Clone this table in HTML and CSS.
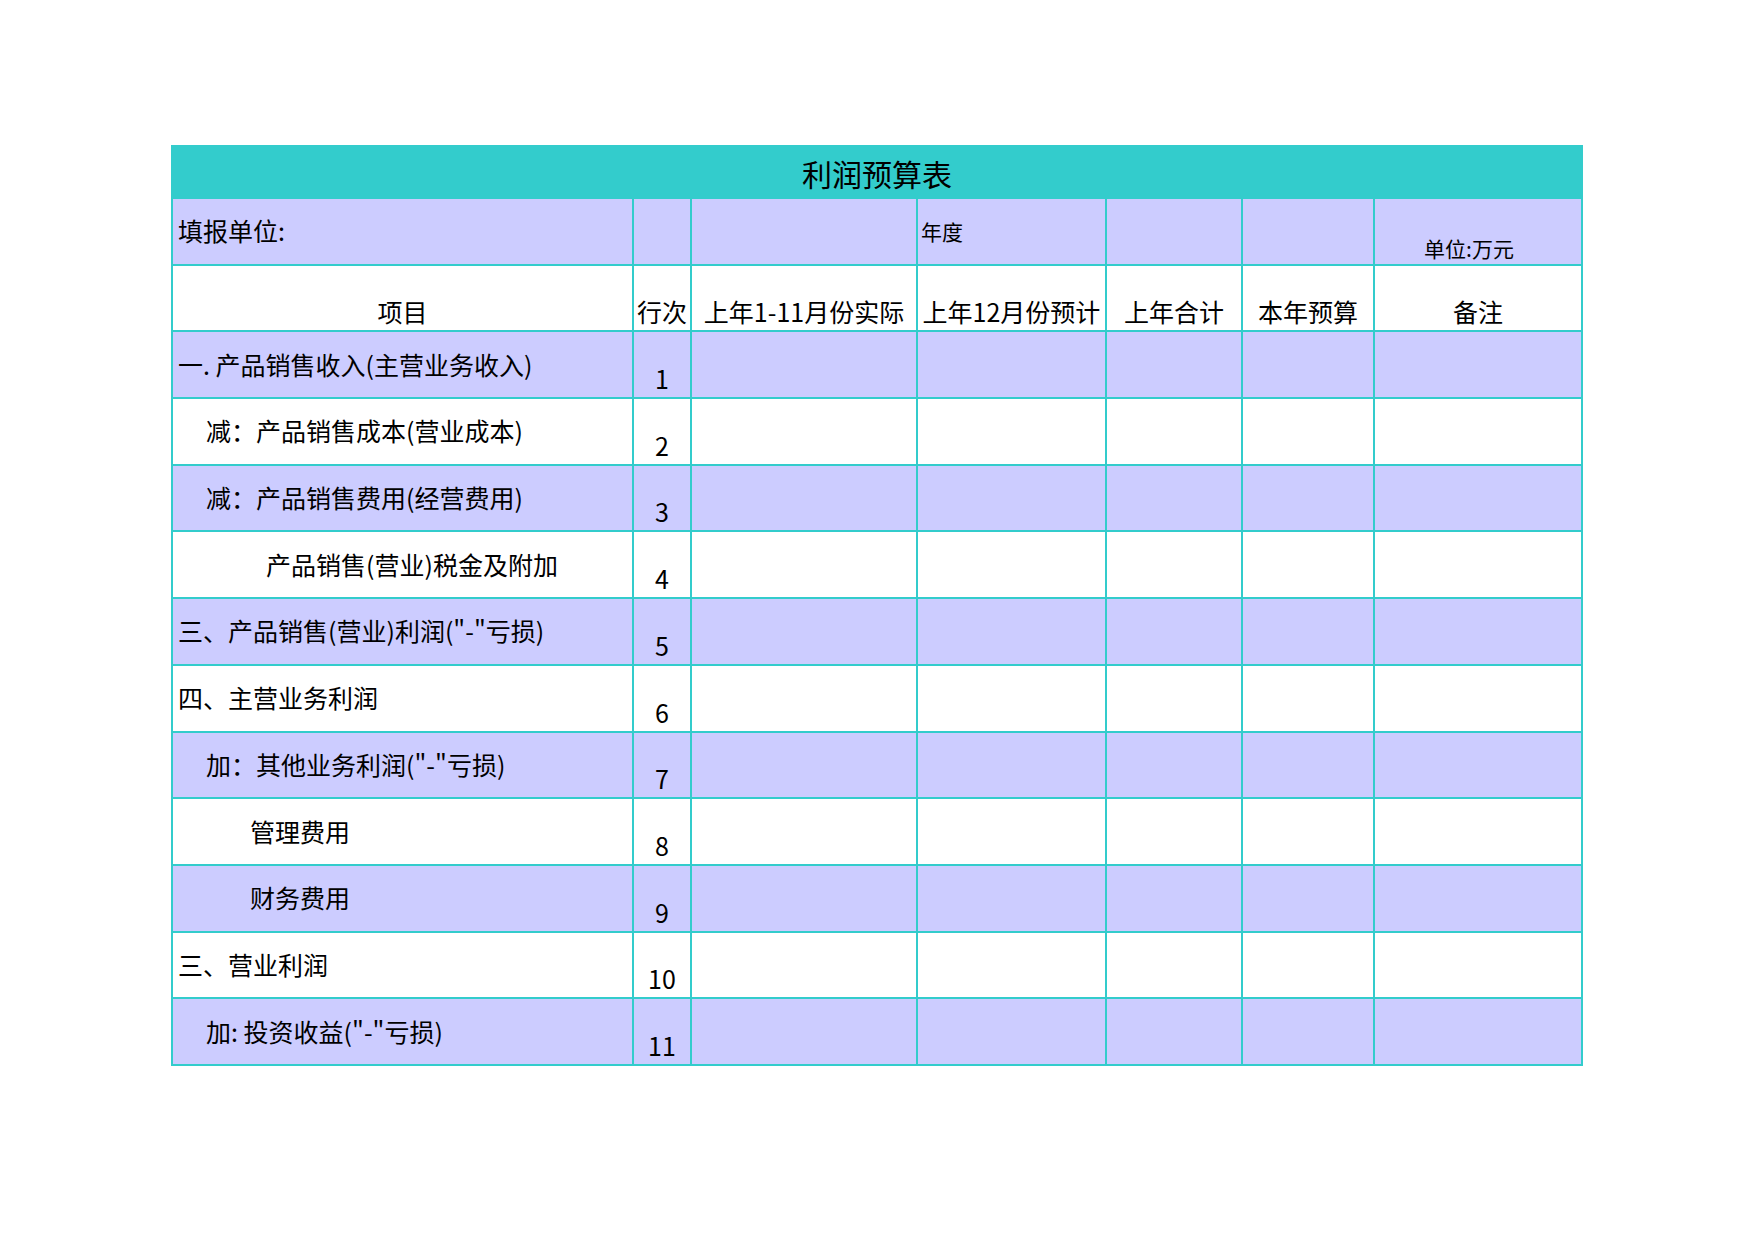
FILE: index.html
```html
<!DOCTYPE html>
<html lang="zh-CN">
<head>
<meta charset="utf-8">
<title>利润预算表</title>
<link rel="stylesheet" href="styles.css">
</head>
<body>
<div class="page">
  <table class="sheet">
    <colgroup>
      <col class="c-item">
      <col class="c-no">
      <col class="c-a">
      <col class="c-b">
      <col class="c-c">
      <col class="c-d">
      <col class="c-e">
    </colgroup>
    <tr class="title-row">
      <td colspan="7" class="title">利润预算表</td>
    </tr>
    <tr class="row lav info">
      <td class="label">填报单位:</td>
      <td></td>
      <td></td>
      <td class="small">年度</td>
      <td></td>
      <td></td>
      <td class="small unit">单位:万元</td>
    </tr>
    <tr class="row head">
      <td class="hd">项目</td>
      <td class="hd">行次</td>
      <td class="hd">上年1-11月份实际</td>
      <td class="hd">上年12月份预计</td>
      <td class="hd">上年合计</td>
      <td class="hd">本年预算</td>
      <td class="hd">备注</td>
    </tr>
    <tr class="row lav">
      <td class="label">一. 产品销售收入(主营业务收入)</td>
      <td class="num">1</td><td></td><td></td><td></td><td></td><td></td>
    </tr>
    <tr class="row">
      <td class="label ind1">减：产品销售成本(营业成本)</td>
      <td class="num">2</td><td></td><td></td><td></td><td></td><td></td>
    </tr>
    <tr class="row lav">
      <td class="label ind1">减：产品销售费用(经营费用)</td>
      <td class="num">3</td><td></td><td></td><td></td><td></td><td></td>
    </tr>
    <tr class="row">
      <td class="label ind3">产品销售(营业)税金及附加</td>
      <td class="num">4</td><td></td><td></td><td></td><td></td><td></td>
    </tr>
    <tr class="row lav">
      <td class="label">三、产品销售(营业)利润("-"亏损)</td>
      <td class="num">5</td><td></td><td></td><td></td><td></td><td></td>
    </tr>
    <tr class="row">
      <td class="label">四、主营业务利润</td>
      <td class="num">6</td><td></td><td></td><td></td><td></td><td></td>
    </tr>
    <tr class="row lav">
      <td class="label ind1">加：其他业务利润("-"亏损)</td>
      <td class="num">7</td><td></td><td></td><td></td><td></td><td></td>
    </tr>
    <tr class="row">
      <td class="label ind2">管理费用</td>
      <td class="num">8</td><td></td><td></td><td></td><td></td><td></td>
    </tr>
    <tr class="row lav">
      <td class="label ind2">财务费用</td>
      <td class="num">9</td><td></td><td></td><td></td><td></td><td></td>
    </tr>
    <tr class="row">
      <td class="label">三、营业利润</td>
      <td class="num">10</td><td></td><td></td><td></td><td></td><td></td>
    </tr>
    <tr class="row lav">
      <td class="label ind1">加: 投资收益("-"亏损)</td>
      <td class="num">11</td><td></td><td></td><td></td><td></td><td></td>
    </tr>
  </table>
</div>
</body>
</html>
```
FILE: styles.css
```css
html, body {
  margin: 0;
  padding: 0;
  background: #ffffff;
}

body {
  font-family: "Microsoft YaHei", "Noto Sans CJK SC", "Noto Sans", sans-serif;
  color: #000000;
}

.page {
  padding: 145px 0 0 171px;
}

.sheet {
  border-collapse: collapse;
  table-layout: fixed;
  width: 1410px;
}

.c-item { width: 461px; }
.c-no { width: 58px; }
.c-a { width: 226px; }
.c-b { width: 189px; }
.c-c { width: 136px; }
.c-d { width: 132px; }
.c-e { width: 208px; }

.sheet td {
  border: 2px solid #33cccc;
  padding: 0;
  font-size: 25px;
  line-height: 30px;
  white-space: nowrap;
  overflow: hidden;
}

.title-row td {
  height: 48px;
  background: #33cccc;
  text-align: center;
  vertical-align: middle;
  font-size: 30px;
  line-height: 36px;
  padding-top: 2px;
}

.row td {
  height: 60.7px;
  background: #ffffff;
}

.row.info td {
  height: 62.7px;
}

.row.lav td {
  background: #ccccff;
}

.label {
  text-align: left;
  vertical-align: middle;
  padding-left: 5px !important;
  padding-bottom: 2px !important;
}

.ind1 { padding-left: 33px !important; }
.ind2 { padding-left: 77px !important; }
.ind3 { padding-left: 93px !important; }

.num {
  text-align: center;
  vertical-align: bottom;
  padding-bottom: 4px !important;
}

.hd {
  text-align: center;
  vertical-align: bottom;
  padding-bottom: 4px !important;
}

.small {
  font-size: 21px !important;
  vertical-align: middle;
  text-align: left;
  padding-left: 3px !important;
}

.unit {
  text-align: center;
  vertical-align: bottom;
  padding-left: 0 !important;
  padding-right: 18px !important;
  padding-bottom: 1px !important;
}
```
